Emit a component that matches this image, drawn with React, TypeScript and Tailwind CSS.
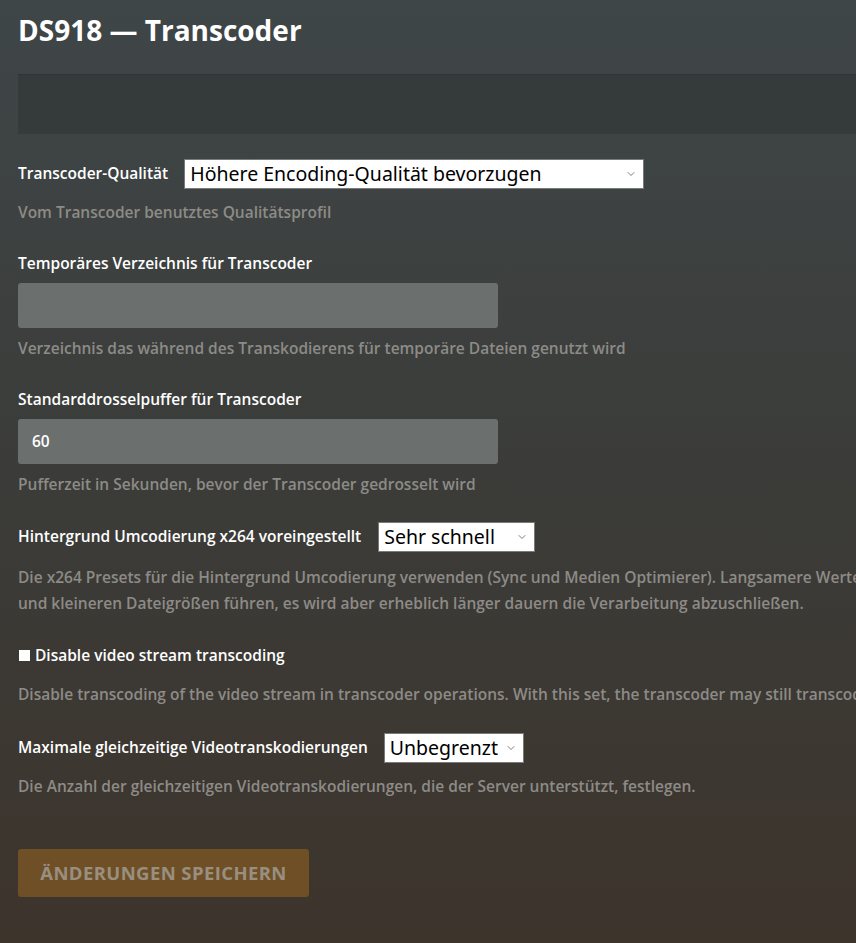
import { ChevronDown } from "lucide-react";

const font = "font-['Open_Sans',_'Noto_Sans',_sans-serif]";

function FakeSelect({ value, width }: { value: string; width: string }) {
  return (
    <div
      className={`flex h-[30px] ${width} shrink-0 items-center justify-between border border-[#7a7a7a] bg-white pl-[5px] pr-[6px] text-black`}
    >
      <span className="font-['Noto_Sans',_sans-serif] text-[19.5px] leading-none whitespace-nowrap">
        {value}
      </span>
      <ChevronDown className="h-3 w-3 text-[#555]" strokeWidth={1.5} />
    </div>
  );
}

function Help({ children, className = "" }: { children: React.ReactNode; className?: string }) {
  return (
    <p
      className={`whitespace-nowrap text-[15.5px] font-semibold leading-[26px] text-[#8d8b87] ${className}`}
    >
      {children}
    </p>
  );
}

export default function App() {
  return (
    <div
      className={`${font} h-[943px] w-[856px] overflow-hidden bg-linear-to-b from-[#3f4648] via-[#3b3c39] to-[#3d342c] text-white`}
    >
      <div className="pl-[18px] pt-[11px]">
        <h1 className="text-[28px] font-bold leading-[38px] text-white">
          DS918 — Transcoder
        </h1>

        <div className="mt-[25px] h-[60px] border-t border-[#30363a] bg-[#343a3a]/90" />

        {/* Transcoder quality */}
        <div className="mt-[25px] flex items-center gap-[16px]">
          <span className="whitespace-nowrap text-[15.5px] font-semibold">
            Transcoder-Qualität
          </span>
          <FakeSelect value="Höhere Encoding-Qualität bevorzugen" width="w-[460px]" />
        </div>
        <Help className="mt-[10px]">Vom Transcoder benutztes Qualitätsprofil</Help>

        {/* Temp dir */}
        <div className="mt-[25px] text-[15.5px] font-semibold leading-[26px]">
          Temporäres Verzeichnis für Transcoder
        </div>
        <div className="mt-[7px] h-[45px] w-[480px] rounded-[3px] bg-[#6b6f6e]" />
        <Help className="mt-[7px]">
          Verzeichnis das während des Transkodierens für temporäre Dateien genutzt wird
        </Help>

        {/* Throttle */}
        <div className="mt-[25px] text-[15.5px] font-semibold leading-[26px]">
          Standarddrosselpuffer für Transcoder
        </div>
        <div className="mt-[7px] flex h-[45px] w-[480px] items-center rounded-[3px] bg-[#6b6f6e] px-[14px] text-[15.5px] font-semibold">
          60
        </div>
        <Help className="mt-[7px]">Pufferzeit in Sekunden, bevor der Transcoder gedrosselt wird</Help>

        {/* x264 preset */}
        <div className="mt-[25px] flex items-center gap-[17px]">
          <span className="whitespace-nowrap text-[15.5px] font-semibold">
            Hintergrund Umcodierung x264 voreingestellt
          </span>
          <FakeSelect value="Sehr schnell" width="w-[157px]" />
        </div>
        <Help className="mt-[12px]">
          Die x264 Presets für die Hintergrund Umcodierung verwenden (Sync und Medien Optimierer). Langsamere Werte können zu besserer Qualität
          <br />
          und kleineren Dateigrößen führen, es wird aber erheblich länger dauern die Verarbeitung abzuschließen.
        </Help>

        {/* Checkbox */}
        <div className="mt-[26px] flex items-center gap-[5px] text-[15.5px] font-semibold leading-[26px]">
          <span className="ml-px h-[11px] w-[11px] bg-white" />
          <span>Disable video stream transcoding</span>
        </div>
        <Help className="mt-[13px]">
          Disable transcoding of the video stream in transcoder operations. With this set, the transcoder may still transcode audio.
        </Help>

        {/* Max transcodes */}
        <div className="mt-[26px] flex items-center gap-[16px]">
          <span className="whitespace-nowrap text-[15.5px] font-semibold">
            Maximale gleichzeitige Videotranskodierungen
          </span>
          <FakeSelect value="Unbegrenzt" width="w-[140px]" />
        </div>
        <Help className="mt-[10px]">
          Die Anzahl der gleichzeitigen Videotranskodierungen, die der Server unterstützt, festlegen.
        </Help>

        <button className="mt-[50px] flex h-[48px] w-[291px] items-center justify-center rounded-[3px] bg-[#6f4f25] text-[18.5px] font-bold uppercase tracking-[0.4px] text-[#998f80]">
          Änderungen speichern
        </button>
      </div>
    </div>
  );
}
